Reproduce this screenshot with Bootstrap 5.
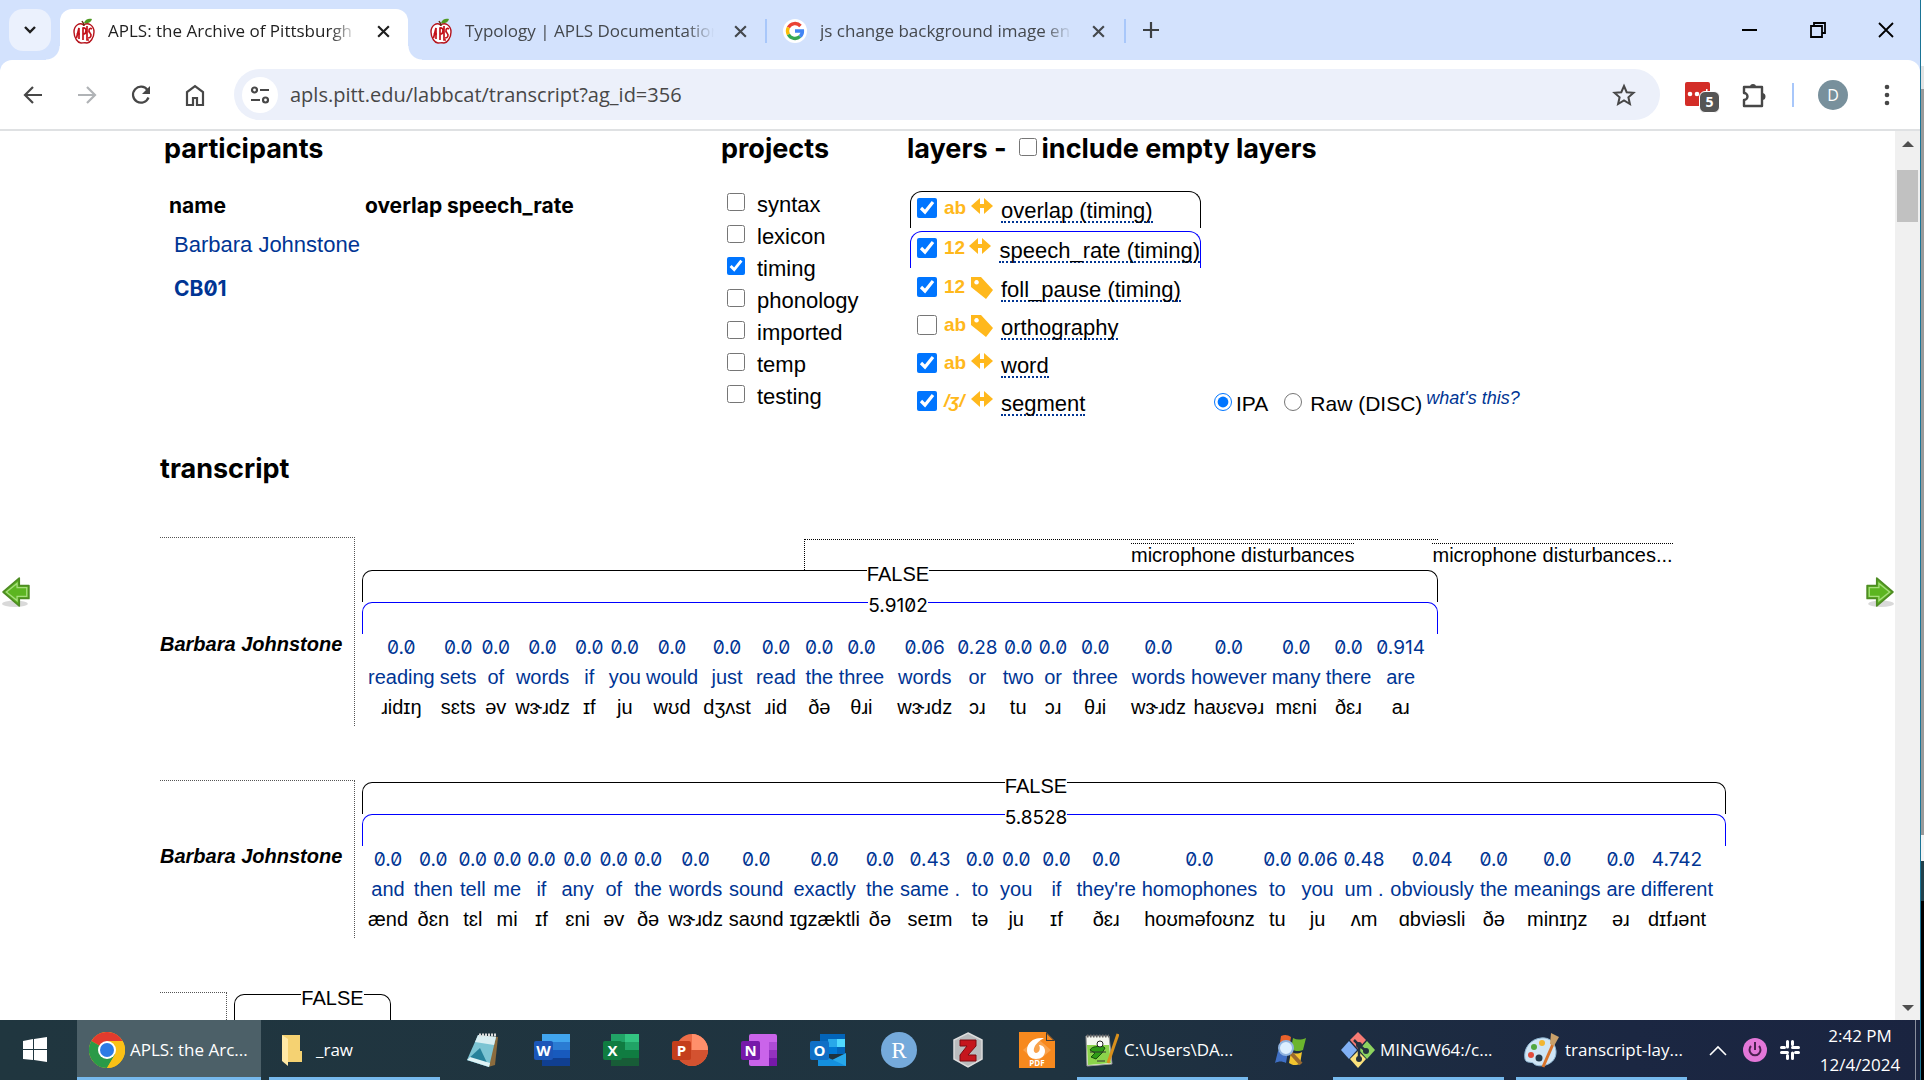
<!DOCTYPE html>
<html lang="en">
<head>
<meta charset="utf-8">
<meta name="viewport" content="width=device-width, initial-scale=1">
<title>APLS: the Archive of Pittsburgh Language and Speech</title>
<link href="https://cdn.jsdelivr.net/npm/bootstrap@5.3.0/dist/css/bootstrap.min.css" rel="stylesheet">
<style>
  body { font-family: "Liberation Sans", Arial, sans-serif; font-size: 20px; color: #000; background: #fff; }
  button { background: none; border: 0; padding: 0; color: inherit; }
  svg { display: block; flex: none; }
  a { text-decoration: none; color: #003594; }
  .edge { width: 4px; border-left: 1px solid #1a7496; background: linear-gradient(#fff 0 66px, #e3e3e3 66px 89px, #9a9a9a 89px 835px, #f4f4f4 835px 861px, #22404a 861px 901px, #000 901px); }

  /* browser chrome */
  .ui { font-family: "Open Sans", "Noto Sans", sans-serif; }
  .tabstrip { background: #d3e2fd; height: 60px; padding: 9px 0 0 9px; color: #44484d; font-size: 17px; }
  .tab-search { width: 42px; height: 42px; border-radius: 14px; background: #ebf1fd; margin-right: 9px; }
  .tab-item { width: 357px; height: 51px; padding: 0 17px 7px 22px; }
  .tab-item.current { width: 348px; background: #fff; border-radius: 12px 12px 0 0; color: #1f1f1f; padding-left: 13px; position: relative; }
  .tab-item.current::before, .tab-item.current::after { content: ""; position: absolute; bottom: 0; width: 14px; height: 14px; }
  .tab-item.current::before { left: -14px; background: radial-gradient(circle at 0 0, transparent 13px, #fff 14px); }
  .tab-item.current::after { right: -14px; background: radial-gradient(circle at 100% 0, transparent 13px, #fff 14px); }
  .tab-title { width: 260px; margin: 0 11px 0 13px; line-height: 26px; white-space: nowrap; -webkit-mask-image: linear-gradient(90deg, #000 86%, transparent 97%); mask-image: linear-gradient(90deg, #000 86%, transparent 97%); }
  .tab-line { width: 2px; height: 24px; background: #a8c7fa; margin-top: 10px; }
  .win-btn { width: 68px; height: 42px; }
  .toolbar-band { background: #d3e2fd; }
  .toolbar-row { height: 71px; border-bottom: 2px solid #dfe1e3; background: #fff; padding: 0 10px 0 6px; color: #474747; border-radius: 12px 12px 0 0; }
  .nav-btn { width: 54px; height: 44px; }
  .address { height: 51px; border-radius: 26px; background: #ecf0fa; margin-left: 12px; padding: 0 24px 0 8px; }
  .site-info { width: 36px; height: 36px; background: #fff; }
  .address input { background: none; border: 0; outline: 0; font-size: 20px; color: #474747; margin-left: 12px; padding: 0; }
  .avatar { width: 30px; height: 30px; background: #78909c; color: #fff; font-size: 16px; }
  .ext { width: 36px; height: 36px; position: relative; }
  .ext-count { position: absolute; right: 0; bottom: 0; width: 21px; height: 22px; border-radius: 6px; background: #555; border: 1px solid #fff; color: #fff; font-size: 14px; line-height: 20px; font-weight: 700; text-align: center; }

  /* page */
  .view { min-height: 0; }
  .page { padding: 0 0 0 160px; overflow: hidden; min-width: 0; position: relative; }
  .head-txt { font-family: "Inter", sans-serif; font-weight: 700; font-size: 27px; line-height: 36px; margin: 0; }
  .settings { font-size: 22px; margin-bottom: 28px; }
  .settings input, .head-txt input { width: 18px; height: 18px; margin: 0; flex: none; }
  .head-txt input { margin: 7px 5px 0 12px; }
  .settings .head-txt input { margin: 7px 5px 0 12px; }
  .col-people { width: 561px; }
  .col-projects { width: 186px; }
  .people { margin-top: 22px; }
  .people th { font-family: "Inter", sans-serif; font-weight: 700; font-size: 21px; line-height: 34px; padding: 0 0 0 5px; }
  .people td { line-height: 44px; padding: 0 0 0 10px; }
  .people th:first-child { padding-right: 51px; }
  .cb { font-family: "Inter", sans-serif; font-weight: 700; font-size: 21px; font-feature-settings: "zero"; }
  .project-list { margin-top: 22px; padding-left: 6px; }
  .project { line-height: 32px; gap: 12px; }
  .layer { width: 291px; height: 38px; border: 1px solid transparent; border-bottom: 0; padding: 5px 0 0 6px; margin-left: 3px; }
  .layer.span-black, .layer.span-blue { border-radius: 12px 12px 0 0; border-color: #000; height: 37px; margin-bottom: 3px; padding-top: 6px; }
  .layer.span-blue { border-color: #00f; }
  .settings .layer input { width: 20px; height: 20px; }
  .kind { width: 27px; margin-left: 7px; color: #ffb81c; font-weight: 700; font-size: 19px; line-height: 20px; }
  .layer label { line-height: 20px; border-bottom: 2px dotted #003594; align-self: flex-start; margin: 3px 0 0 8px; white-space: nowrap; }
  .ipa-choice { margin-left: 13px; line-height: 38px; font-size: 21px; }
  .ipa-choice a { font-size: 18px; line-height: 26px; font-style: italic; }
  .turn { margin-bottom: 54px; }
  .head-txt.transcript { margin-bottom: 50px; }
  .speaker { width: 195px; border-top: 1px dotted #555; border-right: 1px dotted #555; font-weight: 700; font-style: italic; margin-right: 7px; }
  .speaker.brief { width: 67px; height: 100px; }
  .noise { width: 634px; height: 31px; border-top: 1px dotted #000; border-left: 1px dotted #000; padding: 3px 0 0 326px; gap: 78px; white-space: nowrap; margin-top: 2px; }
  .noise span { border-top: 1px dotted #000; line-height: 22px; flex: none; }
  .bracket { border: 1px solid #000; border-bottom: 0; border-radius: 10px 10px 0 0; height: 32px; }
  .bracket.rate { border-color: #00f; }
  .bracket span { background: #fff; line-height: 20px; height: 20px; margin-top: -7px; }
  .num { font-family: "Inter", sans-serif; font-size: 19px; font-feature-settings: "zero"; }
  .line-one { width: 1076px; }
  .line-two { width: 1364px; padding-top: 2px; }
  .line-three { width: 157px; padding-top: 2px; }
  .line-three .bracket { padding-left: 40px; }
  .words { padding: 0 13px 0 6px; line-height: 30px; white-space: nowrap; }
  .word-col { text-align: center; }
  .word-col > * { display: block; }
  .word-col .num { line-height: 28px; color: #003594; }
  .flip { position: absolute; top: 446px; }
  .scroller { width: 25px; background: #f0f0f0; color: #505050; padding: 10px 2px 9px; }
  .thumb { width: 21px; height: 52px; background: #c1c1c1; margin-top: 23px; }

  /* taskbar */
  .taskbar { height: 60px; background: linear-gradient(90deg, #20363f, #1f3340 55%, #1b2742 85%, #1a2440); color: #fff; font-size: 17px; }
  .task { height: 60px; padding: 3px 0 0 12px; gap: 5px; border-bottom: 3px solid #76b9ed; width: 171px; white-space: nowrap; margin-right: 8px; }
  .task.on { background: #4c6068; width: 184px; }
  .pin { width: 69px; height: 60px; }
  .clock { width: 94px; line-height: 29px; text-align: center; }
</style>
<script src="https://cdn.jsdelivr.net/npm/bootstrap@5.3.0/dist/js/bootstrap.bundle.min.js"></script>
</head>
<body>
<svg width="0" height="0" class="position-absolute">
  <defs>
    <symbol id="apple" viewBox="0 0 22 26"><path d="M10.500 7C7 4 1 7 1 14c0 6 4 11 7 11 2 0 4-.5 6 0 3 0 7-5 7-11 0-7-6-10-10.500-7z" fill="#fff" stroke="#b5121b" stroke-width="1.400"/><path d="M3.500 20L6 10v11M3.500 16H7M10 22V10c4-1 4 6 0 6M14 8v14h2M19 11c-3-2-4 2-2 4s1 5-2 5" fill="none" stroke="#c4121b" stroke-width="1.700"/><path d="M11 8c0-3-1-3-2-5" stroke="#5a2d0c" stroke-width="1.400" fill="none"/><path d="M11 5c1-4 5-5 8-4-1 4-5 5-8 4z" fill="#4f9a23"/></symbol>
    <symbol id="cross" viewBox="0 0 14 14"><path d="M2 2l10 10M12 2L2 12" stroke="currentColor" stroke-width="2" fill="none"/></symbol>
    <symbol id="spanicon" viewBox="0 0 22 16"><path d="M0 8l9-8v6h4V0l9 8-9 8v-6H9v6z" fill="#ffb81c"/></symbol>
    <symbol id="tagicon" viewBox="0 0 22 22"><path d="M0 0h10l12 13-7 9L0 10zM5.500 3a2.300 2.300 0 1 0 .1 0z" fill="#ffb81c" fill-rule="evenodd"/></symbol>
    <symbol id="go" viewBox="1 1 26 28"><ellipse cx="15" cy="26" rx="12" ry="3" fill="#000" opacity=".15"/><path d="M2 9h9V2l15 13-15 13v-7H2z" fill="#5cb520" stroke="#4e8c23" stroke-width="1.600" stroke-linejoin="round"/><path d="M4 11h9V7l10 8-10 8v-4H4z" fill="none" stroke="#a6dd7c" stroke-width="1.200"/></symbol>
  </defs>
</svg>
<div class="d-flex vh-100 overflow-hidden">
<div class="d-flex flex-column flex-grow-1 overflow-hidden">

  <header class="ui">
    <div class="tabstrip d-flex align-items-start">
      <button class="tab-search d-flex align-items-center justify-content-center" aria-label="Search tabs"><svg width="14" height="10" viewBox="0 0 14 10"><path d="M2 2l5 5 5-5" fill="none" stroke="#1f1f1f" stroke-width="2.400"/></svg></button>
      <div class="tab-item current d-flex align-items-center"><svg width="22" height="26"><use href="#apple"/></svg><span class="tab-title">APLS: the Archive of Pittsburgh</span><button aria-label="Close tab"><svg width="15" height="15"><use href="#cross"/></svg></button></div>
      <div class="tab-item d-flex align-items-center"><svg width="22" height="26"><use href="#apple"/></svg><span class="tab-title">Typology | APLS Documentation</span><button aria-label="Close tab"><svg width="15" height="15"><use href="#cross"/></svg></button></div>
      <div class="tab-line"></div>
      <div class="tab-item d-flex align-items-center ps-3"><svg width="24" height="24" viewBox="0 0 24 24"><circle cx="12" cy="12" r="12" fill="#fff"/><g fill="none" stroke-width="3.400"><path d="M17.500 7A7.500 7.500 0 0 0 5.400 8.500" stroke="#ea4335"/><path d="M5.400 8.500a7.500 7.500 0 0 0 0 7" stroke="#fbbc05"/><path d="M5.400 15.500a7.500 7.500 0 0 0 11.600 2" stroke="#34a853"/><path d="M17 17.500c1.800-1.500 2.500-3.500 2.400-5.500H12" stroke="#4285f4"/></g></svg><span class="tab-title">js change background image en</span><button aria-label="Close tab"><svg width="15" height="15"><use href="#cross"/></svg></button></div>
      <div class="tab-line"></div>
      <button class="d-flex align-items-center ps-3 mt-2 pt-1" aria-label="New tab"><svg width="18" height="18" viewBox="0 0 18 18"><path d="M9 1v16M1 9h16" stroke="#3c4043" stroke-width="2.200"/></svg></button>
      <div class="d-flex ms-auto text-black">
        <button class="win-btn d-flex align-items-center justify-content-center" aria-label="Minimize"><svg width="16" height="16" viewBox="0 0 16 16"><path d="M0 8h15" stroke="currentColor" stroke-width="2"/></svg></button>
        <button class="win-btn d-flex align-items-center justify-content-center" aria-label="Restore"><svg width="16" height="16" viewBox="0 0 16 16"><path d="M1 4h11v11H1zM4 4V1h11v10h-3" fill="none" stroke="currentColor" stroke-width="1.800"/></svg></button>
        <button class="win-btn d-flex align-items-center justify-content-center" aria-label="Close"><svg width="16" height="16" viewBox="0 0 16 16"><path d="M1 1l14 14M15 1L1 15" stroke="currentColor" stroke-width="1.800"/></svg></button>
      </div>
    </div>
    <div class="toolbar-band">
    <div class="toolbar-row d-flex align-items-center">
      <button class="nav-btn d-flex align-items-center justify-content-center" aria-label="Back"><svg width="20" height="20" viewBox="0 0 20 20"><path d="M19 10H2M10 2l-8 8 8 8" fill="none" stroke="currentColor" stroke-width="2.200"/></svg></button>
      <button class="nav-btn d-flex align-items-center justify-content-center" aria-label="Forward"><svg width="20" height="20" viewBox="0 0 20 20"><path d="M1 10h17M10 2l8 8-8 8" fill="none" stroke="#b0b3b6" stroke-width="2.200"/></svg></button>
      <button class="nav-btn d-flex align-items-center justify-content-center" aria-label="Reload"><svg width="20" height="20" viewBox="0 0 20 20"><path d="M17.500 12.500A8 8 0 1 1 16.500 5L18 7" fill="none" stroke="currentColor" stroke-width="2.200"/><path d="M19 1v8h-8z" fill="currentColor"/></svg></button>
      <button class="nav-btn d-flex align-items-center justify-content-center" aria-label="Home"><svg width="20" height="22" viewBox="0 0 20 22"><path d="M2 21V8l8-6 8 6v13h-6v-7H8v7z" fill="none" stroke="currentColor" stroke-width="2.200"/></svg></button>
      <div class="address d-flex align-items-center flex-grow-1">
        <button class="site-info rounded-circle d-flex align-items-center justify-content-center" aria-label="Site information"><svg width="20" height="18" viewBox="0 0 20 18"><g fill="none" stroke="currentColor" stroke-width="2.200"><circle cx="4.500" cy="4" r="2.500"/><path d="M10 4h9M1 14h9"/><circle cx="15.500" cy="14" r="2.500"/></g></svg></button>
        <input class="flex-grow-1" type="text" aria-label="Address" value="apls.pitt.edu/labbcat/transcript?ag_id=356">
        <button aria-label="Bookmark"><svg width="24" height="24" viewBox="0 0 24 24"><path d="M12 3l2.700 6.200 6.800.6-5.100 4.500 1.500 6.700-5.900-3.500L6.100 21l1.500-6.700L2.500 9.800l6.800-.6z" fill="none" stroke="currentColor" stroke-width="2"/></svg></button>
      </div>
      <div class="ext ms-4"><svg width="27" height="27" class="mt-1" viewBox="0 0 27 27"><rect x="1" y="1" width="25" height="24" rx="2" fill="#d32d27"/><g fill="#fff"><circle cx="6" cy="13" r="2.300"/><circle cx="13" cy="13" r="2.300"/><circle cx="20" cy="13" r="2.300"/><rect x="22" y="8" width="1.500" height="9"/></g></svg><span class="ext-count">5</span></div>
      <button class="ms-3 ps-1" aria-label="Extensions"><svg width="28" height="28" viewBox="0 0 28 28"><path d="M4 6h18v6v13H4v-6a3.500 3.500 0 0 0 0-7z" fill="none" stroke="currentColor" stroke-width="2.400" stroke-linejoin="round"/><path d="M10 6a3 3 0 0 1 6 0zM22 12a3.500 3.500 0 0 1 0 7z" fill="currentColor"/></svg></button>
      <div class="tab-line mt-0 ms-4 me-4"></div>
      <button class="avatar rounded-circle" aria-label="Profile">D</button>
      <button class="nav-btn d-flex align-items-center justify-content-center ms-2 ps-2" aria-label="Menu"><svg width="6" height="24" viewBox="0 0 6 24"><g fill="currentColor"><circle cx="3" cy="4" r="2.300"/><circle cx="3" cy="12" r="2.300"/><circle cx="3" cy="20" r="2.300"/></g></svg></button>
    </div>
    </div>
  </header>

  <div class="view d-flex flex-grow-1">
    <main class="page flex-grow-1">
      <button class="flip start-0" aria-label="Previous page"><svg width="30" height="30" viewBox="0 0 30 30"><g transform="translate(31 0) scale(-1 1)"><use href="#go" width="30" height="30"/></g></svg></button>
      <button class="flip end-0" aria-label="Next page"><svg width="30" height="30"><use href="#go" width="30" height="30"/></svg></button>

      <div class="settings d-flex">
        <section class="col-people">
          <h2 class="head-txt ps-1">participants</h2>
          <table class="people ms-1">
            <thead><tr><th>name</th><th>overlap speech_rate</th></tr></thead>
            <tbody><tr><td><a href="#">Barbara Johnstone</a></td><td></td></tr><tr><td><a class="cb" href="#">CB01</a></td><td></td></tr></tbody>
          </table>
        </section>
        <section class="col-projects">
          <h2 class="head-txt">projects</h2>
          <div class="project-list">
            <div class="project d-flex"><input class="mt-1" type="checkbox" id="p1"><label for="p1">syntax</label></div>
            <div class="project d-flex"><input class="mt-1" type="checkbox" id="p2"><label for="p2">lexicon</label></div>
            <div class="project d-flex"><input class="mt-1" type="checkbox" id="p3" checked><label for="p3">timing</label></div>
            <div class="project d-flex"><input class="mt-1" type="checkbox" id="p4"><label for="p4">phonology</label></div>
            <div class="project d-flex"><input class="mt-1" type="checkbox" id="p5"><label for="p5">imported</label></div>
            <div class="project d-flex"><input class="mt-1" type="checkbox" id="p6"><label for="p6">temp</label></div>
            <div class="project d-flex"><input class="mt-1" type="checkbox" id="p7"><label for="p7">testing</label></div>
          </div>
        </section>
        <section>
          <h2 class="head-txt d-flex">layers - <input type="checkbox" id="inc"><label for="inc">include empty layers</label></h2>
          <div class="mt-4">
            <div class="layer span-black d-flex"><input type="checkbox" id="l1" checked><span class="kind">ab</span><svg width="22" height="16"><use href="#spanicon"/></svg><label for="l1">overlap (timing)</label></div>
            <div class="layer span-blue d-flex"><input type="checkbox" id="l2" checked><span class="kind">12</span><svg width="22" height="16"><use href="#spanicon"/></svg><label for="l2">speech_rate (timing)</label></div>
            <div class="layer d-flex"><input type="checkbox" id="l3" checked><span class="kind">12</span><svg width="22" height="22"><use href="#tagicon"/></svg><label for="l3">foll_pause (timing)</label></div>
            <div class="layer d-flex"><input type="checkbox" id="l4"><span class="kind">ab</span><svg width="22" height="22"><use href="#tagicon"/></svg><label for="l4">orthography</label></div>
            <div class="layer d-flex"><input type="checkbox" id="l5" checked><span class="kind">ab</span><svg width="22" height="16"><use href="#spanicon"/></svg><label for="l5">word</label></div>
            <div class="d-flex">
              <div class="layer d-flex"><input type="checkbox" id="l6" checked><span class="kind fst-italic">/ʒ/</span><svg width="22" height="16"><use href="#spanicon"/></svg><label for="l6">segment</label></div>
              <div class="ipa-choice d-flex align-items-start">
                <input class="mt-2 me-1" type="radio" name="ipa" id="r1" checked><label class="me-3" for="r1">IPA</label>
                <input class="mt-2 me-1" type="radio" name="ipa" id="r2"><label class="ms-1 me-1" for="r2">Raw (DISC)</label>
                <a href="#">what's this?</a>
              </div>
            </div>
          </div>
        </section>
      </div>

      <h2 class="head-txt transcript">transcript</h2>

      <div class="turn d-flex">
        <div class="speaker d-flex align-items-center pt-4">Barbara Johnstone</div>
        <div>
          <div class="line-one d-flex justify-content-end"><div class="noise d-flex"><span>microphone disturbances</span><span>microphone disturbances...</span></div></div>
          <div class="line-one">
            <div class="bracket d-flex justify-content-center pe-1"><span>FALSE</span></div>
            <div class="bracket rate d-flex justify-content-center pe-1"><span class="num">5.9102</span></div>
            <div class="words d-flex justify-content-between pb-1">
              <div class="word-col"><a class="num" href="#">0.0</a><a href="#">reading</a><span>ɹidɪŋ</span></div>
              <div class="word-col"><a class="num" href="#">0.0</a><a href="#">sets</a><span>sɛts</span></div>
              <div class="word-col"><a class="num" href="#">0.0</a><a href="#">of</a><span>əv</span></div>
              <div class="word-col"><a class="num" href="#">0.0</a><a href="#">words</a><span>wɝɹdz</span></div>
              <div class="word-col"><a class="num" href="#">0.0</a><a href="#">if</a><span>ɪf</span></div>
              <div class="word-col"><a class="num" href="#">0.0</a><a href="#">you</a><span>ju</span></div>
              <div class="word-col"><a class="num" href="#">0.0</a><a href="#">would</a><span>wʊd</span></div>
              <div class="word-col"><a class="num" href="#">0.0</a><a href="#">just</a><span>dʒʌst</span></div>
              <div class="word-col me-1"><a class="num" href="#">0.0</a><a href="#">read</a><span>ɹid</span></div>
              <div class="word-col"><a class="num" href="#">0.0</a><a href="#">the</a><span>ðə</span></div>
              <div class="word-col me-2"><a class="num" href="#">0.0</a><a href="#">three</a><span>θɹi</span></div>
              <div class="word-col"><a class="num" href="#">0.06</a><a href="#">words</a><span>wɝɹdz</span></div>
              <div class="word-col"><a class="num" href="#">0.28</a><a href="#">or</a><span>ɔɹ</span></div>
              <div class="word-col"><a class="num" href="#">0.0</a><a href="#">two</a><span>tu</span></div>
              <div class="word-col"><a class="num" href="#">0.0</a><a href="#">or</a><span>ɔɹ</span></div>
              <div class="word-col me-2"><a class="num" href="#">0.0</a><a href="#">three</a><span>θɹi</span></div>
              <div class="word-col"><a class="num" href="#">0.0</a><a href="#">words</a><span>wɝɹdz</span></div>
              <div class="word-col"><a class="num" href="#">0.0</a><a href="#">however</a><span>haʊɛvəɹ</span></div>
              <div class="word-col"><a class="num" href="#">0.0</a><a href="#">many</a><span>mɛni</span></div>
              <div class="word-col"><a class="num" href="#">0.0</a><a href="#">there</a><span>ðɛɹ</span></div>
              <div class="word-col"><a class="num" href="#">0.914</a><a href="#">are</a><span>aɹ</span></div>
            </div>
          </div>
        </div>
      </div>

      <div class="turn d-flex">
        <div class="speaker d-flex align-items-center pb-2">Barbara Johnstone</div>
        <div class="line-two">
          <div class="bracket d-flex justify-content-center pe-3"><span>FALSE</span></div>
          <div class="bracket rate d-flex justify-content-center pe-3"><span class="num">5.8528</span></div>
          <div class="words d-flex justify-content-between pb-1">
            <div class="word-col"><a class="num" href="#">0.0</a><a href="#">and</a><span>ænd</span></div>
            <div class="word-col"><a class="num" href="#">0.0</a><a href="#">then</a><span>ðɛn</span></div>
            <div class="word-col"><a class="num" href="#">0.0</a><a href="#">tell</a><span>tɛl</span></div>
            <div class="word-col"><a class="num" href="#">0.0</a><a href="#">me</a><span>mi</span></div>
            <div class="word-col"><a class="num" href="#">0.0</a><a href="#">if</a><span>ɪf</span></div>
            <div class="word-col"><a class="num" href="#">0.0</a><a href="#">any</a><span>ɛni</span></div>
            <div class="word-col"><a class="num" href="#">0.0</a><a href="#">of</a><span>əv</span></div>
            <div class="word-col"><a class="num" href="#">0.0</a><a href="#">the</a><span>ðə</span></div>
            <div class="word-col"><a class="num" href="#">0.0</a><a href="#">words</a><span>wɝɹdz</span></div>
            <div class="word-col"><a class="num" href="#">0.0</a><a href="#">sound</a><span>saʊnd</span></div>
            <div class="word-col"><a class="num" href="#">0.0</a><a href="#">exactly</a><span>ɪgzæktli</span></div>
            <div class="word-col"><a class="num" href="#">0.0</a><a href="#">the</a><span>ðə</span></div>
            <div class="word-col"><a class="num" href="#">0.43</a><a href="#">same .</a><span>seɪm</span></div>
            <div class="word-col"><a class="num" href="#">0.0</a><a href="#">to</a><span>tə</span></div>
            <div class="word-col me-1"><a class="num" href="#">0.0</a><a href="#">you</a><span>ju</span></div>
            <div class="word-col"><a class="num" href="#">0.0</a><a href="#">if</a><span>ɪf</span></div>
            <div class="word-col"><a class="num" href="#">0.0</a><a href="#">they're</a><span>ðɛɹ</span></div>
            <div class="word-col"><a class="num" href="#">0.0</a><a href="#">homophones</a><span>hoʊməfoʊnz</span></div>
            <div class="word-col"><a class="num" href="#">0.0</a><a href="#">to</a><span>tu</span></div>
            <div class="word-col"><a class="num" href="#">0.06</a><a href="#">you</a><span>ju</span></div>
            <div class="word-col"><a class="num" href="#">0.48</a><a href="#">um .</a><span>ʌm</span></div>
            <div class="word-col"><a class="num" href="#">0.04</a><a href="#">obviously</a><span>ɑbviəsli</span></div>
            <div class="word-col"><a class="num" href="#">0.0</a><a href="#">the</a><span>ðə</span></div>
            <div class="word-col"><a class="num" href="#">0.0</a><a href="#">meanings</a><span>minɪŋz</span></div>
            <div class="word-col"><a class="num" href="#">0.0</a><a href="#">are</a><span>əɹ</span></div>
            <div class="word-col"><a class="num" href="#">4.742</a><a href="#">different</a><span>dɪfɹənt</span></div>
          </div>
        </div>
      </div>

      <div class="turn d-flex">
        <div class="speaker brief"></div>
        <div class="line-three"><div class="bracket d-flex justify-content-center"><span>FALSE</span></div></div>
      </div>
    </main>
    <div class="scroller d-flex flex-column align-items-center">
      <svg width="12" height="6" viewBox="0 0 12 6"><path d="M0 6l6-6 6 6z" fill="currentColor"/></svg>
      <div class="thumb"></div>
      <svg class="mt-auto" width="12" height="6" viewBox="0 0 12 6"><path d="M0 0l6 6 6-6z" fill="currentColor"/></svg>
    </div>
  </div>

  <footer class="taskbar ui d-flex">
    <button class="pin d-flex align-items-center justify-content-center me-2" aria-label="Start"><svg width="24" height="26" viewBox="0 0 24 26"><path d="M0 4l10-2v10H0zM11 2l13-2v12H11zM0 13h10v10L0 22zM11 13h13v12l-13-2z" fill="#fff"/></svg></button>
    <button class="task on d-flex align-items-center"><svg width="36" height="36" viewBox="0 0 36 36"><circle cx="18" cy="18" r="18" fill="#fbc116"/><path d="M18 18L2.400 9A18 18 0 0 1 33.600 9z" fill="#e33b2e"/><path d="M2.400 9A18 18 0 0 0 18 36l8-13.500z" fill="#2a9a48"/><path d="M18 9h15.600A18 18 0 0 1 18 36l8-13.500z" fill="#fbc116"/><circle cx="18" cy="18" r="9" fill="#fff"/><circle cx="18" cy="18" r="7" fill="#2c7be5"/></svg>APLS: the Arc...</button>
    <button class="task d-flex align-items-center"><svg class="me-2" width="22" height="32" viewBox="0 0 22 32"><path d="M1 1h18v16h2v11H7z" fill="#f5d272"/><path d="M1 1l6 4v27l-6-5z" fill="#ffe9a6"/></svg>_raw</button>
    <button class="pin d-flex align-items-center justify-content-center" aria-label="Notepad"><svg width="34" height="34" viewBox="0 0 34 34"><path d="M12 2l20 2-3 28-7 2z" fill="#8b6b3d"/><path d="M12 2l18 2-7 30L1 27z" fill="#7cc4d3"/><path d="M12 2l18 2-2 8-19-3z" fill="#d9eef2"/><path d="M1 27L14 15l9 19z" fill="#27819a"/><path d="M1 27l22 7 1-4-20-6z" fill="#dff2f5"/><path d="M13 2h17" stroke="#ddd" stroke-width="3" stroke-dasharray="2 1"/></svg></button>
    <button class="pin d-flex align-items-center justify-content-center" aria-label="Word"><svg width="36" height="34" viewBox="0 0 36 34"><path d="M8 1h28v8H8z" fill="#41a5ee"/><path d="M8 9h28v8H8z" fill="#2b7cd3"/><path d="M8 17h28v8H8z" fill="#185abd"/><path d="M8 25h28v8H8z" fill="#103f91"/><rect y="8" width="19" height="19" rx="2" fill="#1b56b8"/><text x="9.500" y="23" fill="#fff" font-size="15" font-weight="700" text-anchor="middle">W</text></svg></button>
    <button class="pin d-flex align-items-center justify-content-center" aria-label="Excel"><svg width="36" height="34" viewBox="0 0 36 34"><path d="M8 1h28v32H8z" fill="#21a366"/><path d="M22 1h14v8H22z" fill="#33c481"/><path d="M8 9h14v16H8zM22 17h14v8H22z" fill="#107c41"/><path d="M8 25h28v8H8z" fill="#185c37"/><rect y="8" width="19" height="19" rx="2" fill="#107c41"/><text x="9.500" y="23" fill="#fff" font-size="15" font-weight="700" text-anchor="middle">X</text></svg></button>
    <button class="pin d-flex align-items-center justify-content-center" aria-label="PowerPoint"><svg width="36" height="34" viewBox="0 0 36 34"><circle cx="20" cy="17" r="16" fill="#ed6c47"/><path d="M20 1a16 16 0 0 1 16 16H20z" fill="#ff8f6b"/><path d="M4 17h32a16 16 0 0 1-32 0z" fill="#d35230"/><rect y="8" width="19" height="19" rx="2" fill="#c43e1c"/><text x="9.500" y="23" fill="#fff" font-size="15" font-weight="700" text-anchor="middle">P</text></svg></button>
    <button class="pin d-flex align-items-center justify-content-center" aria-label="OneNote"><svg width="36" height="34" viewBox="0 0 36 34"><rect x="8" y="1" width="28" height="32" rx="2" fill="#ca64ea"/><path d="M28 9h8v8h-8z" fill="#ae4bd5"/><path d="M28 17h8v8h-8z" fill="#9332bf"/><path d="M28 25h8v8h-8z" fill="#7719aa"/><rect y="8" width="19" height="19" rx="2" fill="#7719aa"/><text x="9.500" y="23" fill="#fff" font-size="15" font-weight="700" text-anchor="middle">N</text></svg></button>
    <button class="pin d-flex align-items-center justify-content-center" aria-label="Outlook"><svg width="36" height="34" viewBox="0 0 36 34"><path d="M10 1h25v20H10z" fill="#0364b8"/><path d="M18 6h9v8h-9z" fill="#28a8ea"/><path d="M27 6h8v8h-8z" fill="#50d9ff"/><path d="M18 14h9v7h-9z" fill="#0078d4"/><path d="M8 20l14 7 14-7v13H8z" fill="#28a8ea"/><path d="M8 20l28 13H8z" fill="#1490df"/><rect y="8" width="19" height="19" rx="2" fill="#0f6fc6"/><text x="9.500" y="23" fill="#fff" font-size="15" font-weight="700" text-anchor="middle">O</text></svg></button>
    <button class="pin d-flex align-items-center justify-content-center ps-1" aria-label="RStudio"><svg width="36" height="36" viewBox="0 0 36 36"><circle cx="18" cy="18" r="18" fill="#75aadb"/><text x="18" y="26" fill="#fff" font-size="23" font-family="Liberation Serif, serif" text-anchor="middle">R</text></svg></button>
    <button class="pin d-flex align-items-center justify-content-center ps-1" aria-label="Zotero"><svg width="32" height="36" viewBox="0 0 32 36"><path d="M16 1l14 7v19l-14 8-14-8V8z" fill="#b9bbbd" stroke="#dcdcdc" stroke-width="1.500"/><path d="M8 8h16v6l-8 9h8v6H8v-6l7-9H8z" fill="#c5161d" stroke="#7d0b10"/></svg></button>
    <button class="pin d-flex align-items-center justify-content-center ps-1" aria-label="PDF reader"><svg width="36" height="36" viewBox="0 0 36 36"><path d="M0 0h27l9 9v27H0z" fill="#f7891e"/><path d="M27 0v9h9z" fill="#3b3b3b"/><path d="M28 2v6h6z" fill="#f7891e"/><path d="M18 6l14 12-14 12L4 18z" fill="#f9a24c"/><path d="M25 6C14 5 8 11 8 18c0 6 4 9 9 9 5 0 9-3 9-8 0-4-3-6-6-6 2 4 0 8-3 8-4-1-3-9 8-15z" fill="#fff"/><text x="18" y="34" fill="#fff" font-size="8" font-weight="700" text-anchor="middle">PDF</text></svg></button>
    <button class="task d-flex align-items-center ms-2 ps-2"><svg width="34" height="34" viewBox="0 0 34 34"><path d="M1 3h23l3 28-25 2z" fill="#f5f7f0" stroke="#999"/><path d="M2 12h22l2 18-23 2z" fill="#8bd34b"/><path d="M2 3h22" stroke="#666" stroke-width="3" stroke-dasharray="1.500 1.500"/><path d="M5 17c3-5 8-2 11-5l4 3-3 5-6 6-5-2 4-4z" fill="#2e9b16" stroke="#174e0d"/><circle cx="15" cy="11" r="3" fill="#fff" stroke="#222"/><path d="M33 1L23 30" stroke="#d9901c" stroke-width="3"/><path d="M5 19h16M12 28h8" stroke="#333"/></svg>C:\Users\DA...</button>
    <button class="pin d-flex align-items-center justify-content-center" aria-label="Windows search"><svg width="34" height="34" viewBox="0 0 34 34"><path d="M7 3c4-2 7-1 10 1l-2 12c-4-2-7-2-10 0z" fill="#e9622b"/><path d="M19 5c4 2 8 2 13 0l-3 12c-5 2-8 1-12-1z" fill="#6cb52d"/><path d="M4 18c4-2 7-2 10 0l-2 12c-4-2-7-2-11 0z" fill="#3f6fc4"/><path d="M17 19c4 2 7 2 11 0l-2 12c-5 2-8 1-11-1z" fill="#f3c52f"/><path d="M17 20l10 11" stroke="#9a6a30" stroke-width="4"/><circle cx="12" cy="15" r="7" fill="#dcefff" stroke="#8fb3df" stroke-width="2"/></svg></button>
    <button class="task d-flex align-items-center ms-2 ps-2"><svg width="34" height="36" viewBox="0 0 34 36"><path d="M17 0l8 8-8 9-8-9z" fill="#f77b74"/><path d="M8 9l8 9-8 9-8-9z" fill="#80b0f5"/><path d="M26 9l8 9-8 9-8-9z" fill="#8dd35f"/><path d="M17 19l8 8-8 9-8-9z" fill="#fbe27c"/><path d="M13 8l5 5v15M18 13l7 6" stroke="#22313f" stroke-width="2.500" fill="none"/><g fill="#22313f"><circle cx="18" cy="13" r="3"/><circle cx="25" cy="19" r="3"/><circle cx="18" cy="27" r="3"/></g></svg>MINGW64:/c...</button>
    <button class="task d-flex align-items-center ms-1 ps-2"><svg width="36" height="36" viewBox="0 0 36 36"><path d="M17 6C6 7-1 17 1 27c1 5 8 2 9 5 4 4 23 2 22-13C31 10 25 5 17 6z" fill="#cfe5f5" stroke="#8fb6d3"/><circle cx="7" cy="23" r="3" fill="#e24b3b"/><circle cx="10" cy="15" r="3" fill="#52a83f"/><circle cx="18" cy="11" r="3" fill="#f2b632"/><circle cx="15" cy="26" r="3.500" fill="#22384a"/><path d="M29 12L19 35" stroke="#d9742b" stroke-width="3"/><path d="M27 1l8 4-5 9-4-2z" fill="#c9a06a"/></svg>transcript-lay...</button>
    <div class="d-flex align-items-center ms-auto">
      <button class="me-3" aria-label="Hidden icons"><svg width="18" height="11" viewBox="0 0 18 11"><path d="M1 10l8-8 8 8" fill="none" stroke="#fff" stroke-width="1.600"/></svg></button>
      <svg class="me-2" width="24" height="24" viewBox="0 0 24 24"><circle cx="12" cy="12" r="12" fill="#e377d8"/><path d="M8 8a5.500 5.500 0 1 0 8 0M12 4v8" fill="none" stroke="#4c2050" stroke-width="2"/></svg>
      <svg class="ms-1 me-1" width="22" height="22" viewBox="0 0 22 22"><g stroke="#fff" stroke-width="3" stroke-linecap="round"><path d="M8.500 2.500V8M2.500 8.500h3M13.500 2.500v3M13.500 8.500h6M8.500 16.500v3M2.500 13.500h6M13.500 14v5.500M16.500 13.500h3"/></g></svg>
      <div class="clock mx-2">2:42 PM<br>12/4/2024</div>
      <div class="vr h-100 bg-light opacity-50 me-1"></div>
    </div>
  </footer>
</div>
<div class="edge flex-shrink-0"></div>
</div>
</body>
</html>
